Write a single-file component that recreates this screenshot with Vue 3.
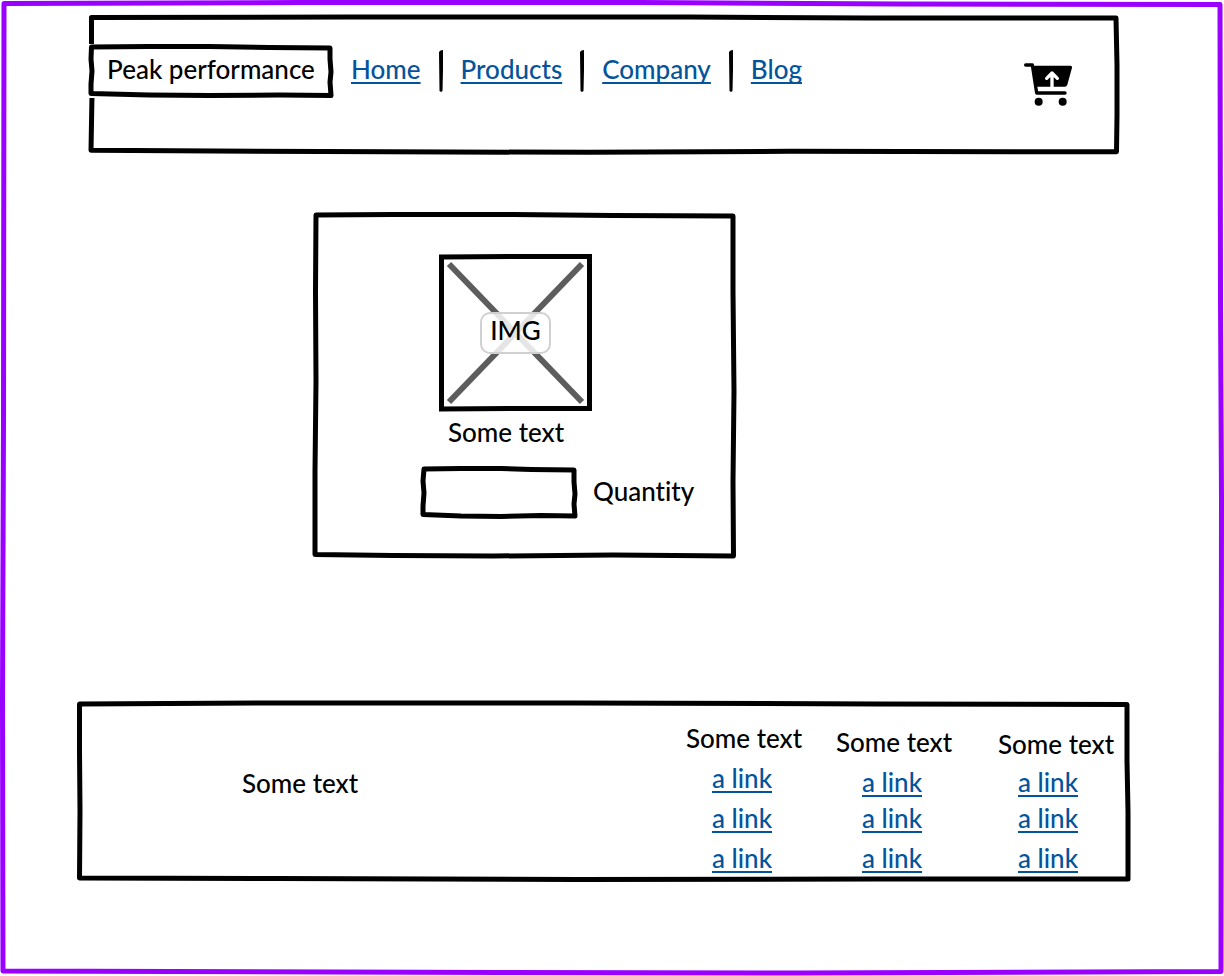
<script setup>
import { ref } from 'vue'

const quantity = ref('')
const navLinks = ['Home', 'Products', 'Company', 'Blog']
const footerColumns = [
  { id: 'first', title: 'Some text', links: ['a link', 'a link', 'a link'] },
  { id: 'second', title: 'Some text', links: ['a link', 'a link', 'a link'] },
  { id: 'third', title: 'Some text', links: ['a link', 'a link', 'a link'] },
]
</script>

<template>
  <div class="page">
    <svg class="frame frame-page" viewBox="0 0 1224 976" preserveAspectRatio="none" aria-hidden="true">
      <path d="M4 3.5L300 2.5L640 2.5L900 4L1220 4.5L1220.500 300L1221.500 500L1221 971.500L800 973L500 972.500L3 971L2.500 700L3.500 420Z" />
    </svg>

    <header class="header">
      <svg class="frame" viewBox="0 0 1030 138" preserveAspectRatio="none" aria-hidden="true">
        <path d="M2.500 2.500L260 2L600 2L780 3L1027 3L1028 50L1028 100L1027.500 136.500L700 136L500 137L300 136.500L2 135L3 80L2.500 50Z" />
      </svg>
      <button type="button" class="brand">
        <svg class="frame" viewBox="0 0 244 54" preserveAspectRatio="none" aria-hidden="true">
          <path d="M2.500 3L60 2.500L120 2.500L180 3.500L241 4L241 15L242 28L241 38L242 51.500L190 51L120 51.500L60 51L2 49.500L2 40L3 27L2 15Z" />
        </svg>
        <span class="brand-text">Peak performance</span>
      </button>
      <nav class="nav" aria-label="Main">
        <template v-for="(item, i) in navLinks" :key="item">
          <svg v-if="i > 0" class="divider" viewBox="0 0 4 42" aria-hidden="true">
            <path d="M0 2Q1 0 4 0L4 20L3.500 41L2 42L0.500 41Z" />
          </svg>
          <a href="#" class="link">{{ item }}</a>
        </template>
      </nav>
      <button type="button" class="cart" aria-label="Cart">
        <svg viewBox="42 38 144 130" aria-hidden="true">
          <path d="M47 44H67L80 128H165" fill="none" stroke="#000" stroke-width="10" stroke-linecap="round" stroke-linejoin="round" />
          <path d="M68 46H181Q187 46 186 52L172 103Q170 109 164 109H80Z" />
          <path d="M126 113V72M110 84L126 68L142 84" fill="none" stroke="#fff" stroke-width="10" stroke-linecap="round" stroke-linejoin="round" />
          <path d="M86 110H132V121H86Z" fill="#fff" />
          <circle cx="86" cy="154" r="12" />
          <circle cx="158" cy="154" r="12" />
        </svg>
      </button>
    </header>

    <main class="main">
      <section class="card">
        <svg class="frame" viewBox="0 0 423 347" preserveAspectRatio="none" aria-hidden="true">
          <path d="M3 3L80 2.500L200 2.500L300 3.500L420 4L420 80L421 180L420 270L420.500 345L300 344L180 345L80 344.500L2 343.500L2 260L3 170L2.500 80Z" />
        </svg>
        <div class="picture" role="img" aria-label="Image">
          <svg class="frame" viewBox="0 0 153 157" preserveAspectRatio="none" aria-hidden="true">
            <path class="cross" d="M10 10L143 148M143 10L10 148" />
            <path class="sharp" d="M2.500 3L90 2.500H150.500V154.500H80L2.500 155Z" />
          </svg>
          <span class="tag">IMG</span>
        </div>
        <p class="caption">Some text</p>
        <div class="field">
          <div class="box">
            <svg class="frame" viewBox="0 0 156 52" preserveAspectRatio="none" aria-hidden="true">
              <path d="M3 3L40 2.500L80 2.500L110 3.500L153 4L153 16L154 28L153 38L154 50L120 49.500L80 50.500L40 50L2 48.500L2 40L3 27L2 15Z" />
            </svg>
            <input id="quantity" v-model="quantity" type="text" />
          </div>
          <label for="quantity">Quantity</label>
        </div>
      </section>
    </main>

    <footer class="footer">
      <svg class="frame" viewBox="0 0 1053 180" preserveAspectRatio="none" aria-hidden="true">
        <path d="M2.500 3L200 2L500 2L800 3L1050 3.500L1050 60L1051 110L1051 178L800 178L500 178.500L200 177.500L2.500 177L3 110L2.500 50Z" />
      </svg>
      <p class="about">Some text</p>
      <section v-for="column in footerColumns" :key="column.id" class="column" :class="column.id">
        <h2>{{ column.title }}</h2>
        <ul>
          <li v-for="(item, i) in column.links" :key="i"><a href="#" class="link">{{ item }}</a></li>
        </ul>
      </section>
    </footer>
  </div>
</template>

<style>
body {
  margin: 0;
  background: #fff;
}
</style>

<style scoped>
.page {
  position: relative;
  display: flex;
  flex-direction: column;
  box-sizing: border-box;
  min-height: 100vh;
  padding: 15px 94px 95px 77px;
  font-family: Lato, "Noto Sans", sans-serif;
  font-size: 26px;
  line-height: 32px;
  font-weight: 500;
  font-variant-ligatures: none;
  color: #000;
}

p,
h2,
ul {
  margin: 0;
  padding: 0;
  font: inherit;
  list-style: none;
}

button,
input {
  margin: 0;
  padding: 0;
  border: 0;
  background: none;
  color: inherit;
  font: inherit;
}

.frame {
  position: absolute;
  inset: 0;
  width: 100%;
  height: 100%;
  overflow: visible;
  pointer-events: none;
}

.frame path {
  fill: none;
  stroke: #000;
  stroke-width: 5px;
  stroke-linejoin: round;
  vector-effect: non-scaling-stroke;
}

.frame-page path {
  stroke: #9900ff;
}

.frame .cross {
  stroke: #5d5d5d;
  stroke-width: 6px;
}

.frame .sharp {
  stroke-linejoin: miter;
}

.link {
  color: #04549c;
  text-decoration: underline;
  text-decoration-thickness: 2px;
  text-underline-offset: 3px;
  text-decoration-skip-ink: none;
}

.header {
  position: relative;
  display: flex;
  align-items: flex-start;
  gap: 16px;
  margin: 0 11px 0 12px;
  padding: 29px 47px 47px 0;
}

.brand {
  position: relative;
  box-sizing: border-box;
  width: 244px;
  height: 54px;
  padding-bottom: 4px;
  background: #fff;
}

.brand-text {
  position: relative;
}

.nav {
  display: flex;
  align-items: center;
  gap: 16px;
  height: 54px;
}

.nav .link {
  padding: 0 2px 4px;
}

.divider {
  width: 4px;
  height: 42px;
}

.cart {
  align-self: flex-end;
  margin-left: auto;
}

.cart svg {
  display: block;
  width: 48px;
}

.header > .cart {
  margin-top: 19px;
}

.main {
  display: grid;
  grid-template-columns: 236fr 423fr 394fr;
  margin: 59px 0 auto;
}

.card {
  position: relative;
  grid-column: 2;
  padding: 42px 40px 40px 108px;
}

.picture {
  position: relative;
  display: flex;
  align-items: center;
  justify-content: center;
  width: 153px;
  height: 157px;
  margin-left: 18px;
}

.tag {
  position: relative;
  padding: 0 8px 6px;
  border: 2px solid #d0d0d0;
  border-radius: 10px;
  background: rgba(255, 255, 255, 0.84);
}

.caption {
  margin: 5px 0 18px 27px;
}

.field {
  display: flex;
  align-items: center;
  gap: 16px;
}

.field label {
  padding-bottom: 2px;
}

.box {
  position: relative;
  width: 156px;
  height: 52px;
}

.box input {
  position: relative;
  box-sizing: border-box;
  width: 100%;
  height: 100%;
  padding: 0 12px;
  outline: none;
}

.footer {
  position: relative;
  display: grid;
  grid-template-columns: 609fr 150fr 162fr 132fr;
  align-items: end;
  padding: 21px 0 7px;
}

.about {
  align-self: center;
  padding: 0 0 30px 165px;
}

.column ul {
  margin-top: 8px;
  padding-left: 26px;
}

.column li + li {
  margin-top: 8px;
}

.second li:nth-child(2),
.third li:nth-child(2) {
  margin-top: 4px;
}

.third ul {
  margin-top: 6px;
  padding-left: 20px;
}
</style>
